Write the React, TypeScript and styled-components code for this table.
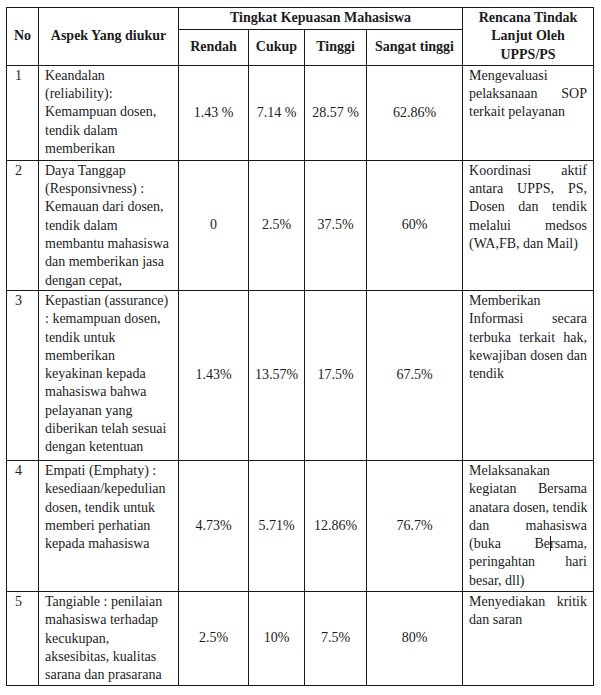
import React from "react";
import styled, { createGlobalStyle } from "styled-components";

const Global = createGlobalStyle`
  html, body { margin: 0; padding: 0; background: #ffffff; }
  body { font-family: "Liberation Serif", "Times New Roman", serif; color: #1c1c1c; }
`;

const Page = styled.div`
  padding: 7px 0 0 6px;
  font-family: "Liberation Serif", "Times New Roman", serif;
`;

const Table = styled.table`
  border-collapse: collapse;
  table-layout: fixed;
  width: 587px;
  font-family: "Liberation Serif", "Times New Roman", serif;
  font-size: 14px;
  line-height: 18.3px;
  color: #1c1c1c;
`;

const BodyRow = styled.tr<{ $h: number }>`
  height: ${(p) => p.$h}px;
`;

const HeadCell = styled.th<{ $top?: boolean }>`
  border: 1px solid #1a1a1a;
  font-weight: bold;
  text-align: center;
  vertical-align: ${(p) => (p.$top ? "top" : "middle")};
  padding: 1px 6px;
`;

const NoCell = styled.td`
  border: 1px solid #1a1a1a;
  vertical-align: top;
  padding: 1px 6px 0 8px;
`;

const TextCell = styled.td`
  border: 1px solid #1a1a1a;
  vertical-align: top;
  padding: 1px 6px 0;
`;

const ValueCell = styled.td`
  border: 1px solid #1a1a1a;
  vertical-align: middle;
  text-align: center;
  padding: 0 4px;
`;

const Line = styled.span<{ $justify?: boolean }>`
  display: block;
  white-space: nowrap;
  text-align: ${(p) => (p.$justify ? "justify" : "left")};
  text-align-last: ${(p) => (p.$justify ? "justify" : "left")};
`;

const Caret = styled.span`
  display: inline-block;
  width: 1px;
  height: 15px;
  margin: 0 -1px -3px 0;
  background: #1c1c1c;
`;

type Row = {
  no: string;
  h: number;
  aspek: React.ReactNode[];
  values: string[];
  rencana: { text: React.ReactNode; justify?: boolean }[];
};

const rows: Row[] = [
  {
    no: "1",
    h: 95,
    aspek: ["Keandalan", "(reliability):", "Kemampuan dosen,", "tendik dalam", "memberikan"],
    values: ["1.43 %", "7.14 %", "28.57 %", "62.86%"],
    rencana: [
      { text: "Mengevaluasi" },
      { text: "pelaksanaan SOP", justify: true },
      { text: "terkait pelayanan" },
    ],
  },
  {
    no: "2",
    h: 130,
    aspek: [
      "Daya Tanggap",
      "(Responsivness) :",
      "Kemauan dari dosen,",
      "tendik dalam",
      "membantu mahasiswa",
      "dan memberikan jasa",
      "dengan cepat,",
    ],
    values: ["0", "2.5%", "37.5%", "60%"],
    rencana: [
      { text: "Koordinasi aktif", justify: true },
      { text: "antara UPPS, PS,", justify: true },
      { text: "Dosen dan tendik", justify: true },
      { text: "melalui medsos", justify: true },
      { text: "(WA,FB, dan Mail)" },
    ],
  },
  {
    no: "3",
    h: 170,
    aspek: [
      "Kepastian (assurance)",
      ": kemampuan dosen,",
      "tendik untuk",
      "memberikan",
      "keyakinan kepada",
      "mahasiswa bahwa",
      "pelayanan yang",
      "diberikan telah sesuai",
      "dengan ketentuan",
    ],
    values: ["1.43%", "13.57%", "17.5%", "67.5%"],
    rencana: [
      { text: "Memberikan" },
      { text: "Informasi secara", justify: true },
      { text: "terbuka terkait hak,", justify: true },
      { text: "kewajiban dosen dan", justify: true },
      { text: "tendik" },
    ],
  },
  {
    no: "4",
    h: 131,
    aspek: [
      "Empati (Emphaty) :",
      "kesediaan/kepedulian",
      "dosen, tendik untuk",
      "memberi perhatian",
      "kepada mahasiswa",
    ],
    values: ["4.73%", "5.71%", "12.86%", "76.7%"],
    rencana: [
      { text: "Melaksanakan" },
      { text: "kegiatan Bersama", justify: true },
      { text: "anatara dosen, tendik", justify: true },
      { text: "dan mahasiswa", justify: true },
      {
        text: (
          <>
            (buka Be<Caret />rsama,
          </>
        ),
        justify: true,
      },
      { text: "peringahtan hari", justify: true },
      { text: "besar, dll)" },
    ],
  },
  {
    no: "5",
    h: 94,
    aspek: [
      "Tangiable : penilaian",
      "mahasiswa terhadap",
      "kecukupan,",
      "aksesibitas, kualitas",
      "sarana dan prasarana",
    ],
    values: ["2.5%", "10%", "7.5%", "80%"],
    rencana: [
      { text: "Menyediakan kritik", justify: true },
      { text: "dan saran" },
    ],
  },
];

export default function App() {
  return (
    <Page>
      <Global />
      <Table>
        <colgroup>
          <col style={{ width: 32 }} />
          <col style={{ width: 140 }} />
          <col style={{ width: 70 }} />
          <col style={{ width: 56 }} />
          <col style={{ width: 62 }} />
          <col style={{ width: 96 }} />
          <col style={{ width: 131 }} />
        </colgroup>
        <thead>
          <BodyRow $h={20}>
            <HeadCell rowSpan={2}>No</HeadCell>
            <HeadCell rowSpan={2}>Aspek Yang diukur</HeadCell>
            <HeadCell colSpan={4}>Tingkat Kepuasan Mahasiswa</HeadCell>
            <HeadCell rowSpan={2} $top>
              Rencana Tindak Lanjut Oleh UPPS/PS
            </HeadCell>
          </BodyRow>
          <BodyRow $h={36}>
            <HeadCell>Rendah</HeadCell>
            <HeadCell>Cukup</HeadCell>
            <HeadCell>Tinggi</HeadCell>
            <HeadCell>Sangat tinggi</HeadCell>
          </BodyRow>
        </thead>
        <tbody>
          {rows.map((r) => (
            <BodyRow key={r.no} $h={r.h}>
              <NoCell>{r.no}</NoCell>
              <TextCell>
                {r.aspek.map((l, i) => (
                  <Line key={i}>{l}</Line>
                ))}
              </TextCell>
              {r.values.map((v, i) => (
                <ValueCell key={i}>{v}</ValueCell>
              ))}
              <TextCell>
                {r.rencana.map((l, i) => (
                  <Line key={i} $justify={l.justify}>
                    {l.text}
                  </Line>
                ))}
              </TextCell>
            </BodyRow>
          ))}
        </tbody>
      </Table>
    </Page>
  );
}
